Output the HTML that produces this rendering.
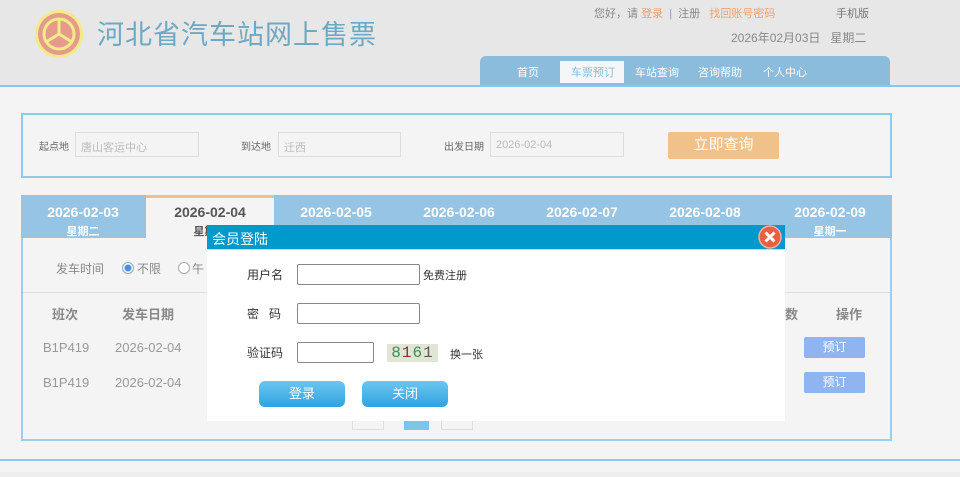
<!DOCTYPE html>
<html><head><meta charset="utf-8"><style>
*{margin:0;padding:0;box-sizing:border-box}
body{width:960px;height:477px;overflow:hidden;background:#f4f4f4;font-family:"Liberation Sans","Noto Sans CJK SC",sans-serif;position:relative;font-size:12px;color:#666}
.a{position:absolute;white-space:nowrap}
#hd{position:absolute;left:0;top:0;width:960px;height:85px;background:#e7e7e7}
#hl{position:absolute;left:0;top:85px;width:960px;height:2px;background:#85c9ea}
.nav{left:480px;top:56px;width:410px;height:29px;background:#8bbcdc;border-radius:6px 6px 0 0}
.ni{color:#fff;font-size:11px;top:64px}
.inp{background:#f4f4f4;border:1px solid #ddd;color:#bbb;font-size:11px;padding:6px 5px;height:25px}
.tab{top:195px;height:43px;width:124px;text-align:center;color:#fff;font-weight:bold}
.tab b{display:block;font-size:14px;margin-top:9px;line-height:16px}
.tab i{display:block;font-style:normal;font-size:11px;line-height:14px;margin-top:5px}
.btn{background:#8fb4f0;color:#fff;width:61px;height:21px;text-align:center;line-height:20px;font-size:12px;border-radius:2px}
.mi{border:1px solid #888;background:#fff;border-radius:2px;height:21px}
.mb{width:86px;height:26px;border-radius:6px;background:linear-gradient(#6cc6f0,#2ea3df);color:#fff;text-align:center;line-height:26px;font-size:13px}
</style></head><body>
<div id="hd"></div><div id="hl"></div>
<svg class="a" style="left:34px;top:9px" width="50" height="50" viewBox="0 0 50 50"><circle cx="25" cy="25" r="24" fill="#f3ea8a"/><circle cx="25" cy="25" r="21" fill="#e69a8a"/><circle cx="25" cy="25" r="15" fill="none" stroke="#f3ea8a" stroke-width="3"/><path d="M25 10V25L12 33M25 25L38 33" stroke="#f3ea8a" stroke-width="3" fill="none"/></svg>
<div class="a" style="left:97px;top:13px;font-size:27px;color:#6ea8c2;letter-spacing:1px">河北省汽车站网上售票</div>
<div class="a" style="left:594px;top:5px;font-size:11px;color:#888">您好，请 <span style="color:#f0a070">登录</span> &nbsp;<span style="color:#99b">|</span>&nbsp; 注册 &nbsp; <span style="color:#f0a070">找回账号密码</span></div>
<div class="a" style="left:836px;top:5px;font-size:11px;color:#777">手机版</div>
<div class="a" style="left:731px;top:29px;font-size:12px;color:#888">2026年02月03日 &nbsp; 星期二</div>
<div class="a nav"></div>
<div class="a" style="left:560px;top:61px;width:64px;height:22px;background:#f4f6f8"></div>
<div class="a ni" style="left:517px">首页</div>
<div class="a ni" style="left:571px;color:#8bbcdc">车票预订</div>
<div class="a ni" style="left:635px">车站查询</div>
<div class="a ni" style="left:698px">咨询帮助</div>
<div class="a ni" style="left:763px">个人中心</div>

<div class="a" style="left:21px;top:113px;width:871px;height:65px;border:2px solid #8ccbec"></div>
<div class="a" style="left:39px;top:138px;font-size:10px">起点地</div>
<div class="a inp" style="left:75px;top:132px;width:124px">唐山客运中心</div>
<div class="a" style="left:241px;top:138px;font-size:10px">到达地</div>
<div class="a inp" style="left:278px;top:132px;width:123px">迁西</div>
<div class="a" style="left:444px;top:138px;font-size:10px">出发日期</div>
<div class="a inp" style="left:490px;top:132px;width:134px">2026-02-04</div>
<div class="a" style="left:668px;top:132px;width:111px;height:27px;background:#f0c28a;color:#fff;font-size:15px;text-align:center;line-height:26px;border-radius:2px">立即查询</div>

<div class="a" style="left:21px;top:195px;width:871px;height:246px;border:2px solid #9ccfea;border-top:none;background:#f4f4f4"></div>
<div class="a" style="left:21px;top:195px;width:871px;height:43px;background:#95c4e4"></div>
<div class="a tab" style="left:21px"><b>2026-02-03</b><i>星期二</i></div>
<div class="a tab" style="left:146px;width:128px;background:#f4f4f4;border-top:3px solid #f0c08a;color:#555"><b style="margin-top:6px">2026-02-04</b><i>星期三</i></div>
<div class="a tab" style="left:274px"><b>2026-02-05</b></div>
<div class="a tab" style="left:397px"><b>2026-02-06</b></div>
<div class="a tab" style="left:520px"><b>2026-02-07</b></div>
<div class="a tab" style="left:643px"><b>2026-02-08</b></div>
<div class="a tab" style="left:768px"><b>2026-02-09</b><i>星期一</i></div>
<div class="a" style="left:56px;top:260px;font-size:12px;color:#888">发车时间</div>
<div class="a" style="left:122px;top:262px;width:12px;height:12px;border:1px solid #8ab;border-radius:50%;background:radial-gradient(#4a90e2 3px,#fff 4px)"></div>
<div class="a" style="left:137px;top:260px;color:#888">不限</div>
<div class="a" style="left:178px;top:262px;width:12px;height:12px;border:1px solid #aaa;border-radius:50%;background:#fff"></div>
<div class="a" style="left:192px;top:260px;color:#888">午</div>
<div class="a" style="left:23px;top:292px;width:867px;height:1px;background:#ddd"></div>
<div class="a" style="left:52px;top:304px;font-size:13px;color:#888;font-weight:bold">班次</div>
<div class="a" style="left:122px;top:304px;font-size:13px;color:#888;font-weight:bold">发车日期</div>
<div class="a" style="left:785px;top:304px;font-size:13px;color:#888;font-weight:bold">数</div>
<div class="a" style="left:836px;top:304px;font-size:13px;color:#888;font-weight:bold">操作</div>
<div class="a" style="left:43px;top:340px;font-size:13px;color:#999">B1P419</div>
<div class="a" style="left:115px;top:340px;font-size:13px;color:#999">2026-02-04</div>
<div class="a" style="left:43px;top:375px;font-size:13px;color:#999">B1P419</div>
<div class="a" style="left:115px;top:375px;font-size:13px;color:#999">2026-02-04</div>
<div class="a btn" style="left:804px;top:337px">预订</div>
<div class="a btn" style="left:804px;top:372px">预订</div>
<div class="a" style="left:352px;top:410px;width:32px;height:20px;border:1px solid #ddd"></div>
<div class="a" style="left:404px;top:410px;width:25px;height:20px;background:#7cc5ea"></div>
<div class="a" style="left:441px;top:410px;width:32px;height:20px;border:1px solid #ddd"></div>
<div class="a" style="left:0;top:459px;width:960px;height:2px;background:#8ccbec"></div>
<div class="a" style="left:0;top:472px;width:960px;height:5px;background:#eee"></div>

<div class="a" style="left:207px;top:225px;width:578px;height:196px;background:#fff"></div>
<div class="a" style="left:207px;top:225px;width:578px;height:25px;background:#0099cc;border-bottom:1px solid #bde"></div>
<div class="a" style="left:212px;top:229px;font-size:14px;color:#fff">会员登陆</div>
<svg class="a" style="left:758px;top:225px" width="24" height="24" viewBox="0 0 24 24"><circle cx="12" cy="12" r="11" fill="#e8603f" stroke="#f5b0a0" stroke-width="1.5"/><path d="M7.5 7.5L16.5 16.5M16.5 7.5L7.5 16.5" stroke="#fff" stroke-width="3"/></svg>
<div class="a" style="left:247px;top:266px;color:#333">用户名</div>
<div class="a mi" style="left:297px;top:264px;width:123px"></div>
<div class="a" style="left:423px;top:267px;color:#333;font-size:11px">免费注册</div>
<div class="a" style="left:247px;top:305px;color:#333">密 &nbsp; 码</div>
<div class="a mi" style="left:297px;top:303px;width:123px"></div>
<div class="a" style="left:247px;top:344px;color:#333">验证码</div>
<div class="a mi" style="left:297px;top:342px;width:77px"></div>
<div class="a" style="left:387px;top:344px;width:51px;height:18px;background:#dfe6d6;font-family:'Liberation Mono',monospace;font-size:16px;line-height:18px;letter-spacing:1px;color:#485;text-align:center">8<span style="color:#833">1</span>6<span style="color:#655">1</span></div>
<div class="a" style="left:450px;top:346px;color:#333;font-size:11px">换一张</div>
<div class="a mb" style="left:259px;top:381px">登录</div>
<div class="a mb" style="left:362px;top:381px">关闭</div>
</body></html>
